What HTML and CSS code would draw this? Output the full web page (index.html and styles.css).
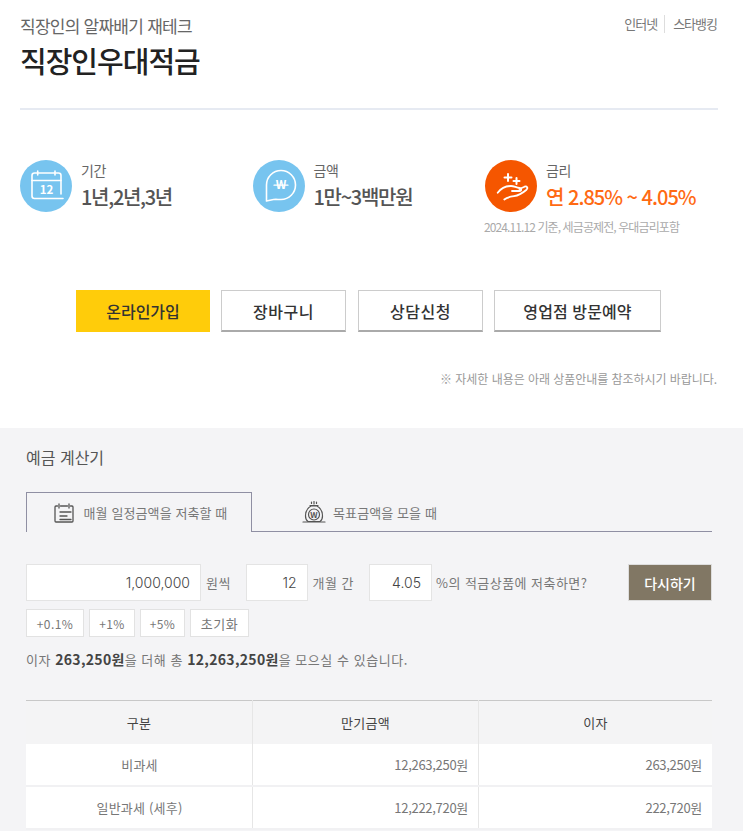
FILE: index.html
```html
<!DOCTYPE html>
<html lang="ko">
<head>
    <meta charset="UTF-8">
    <meta name="viewport" content="width=device-width, initial-scale=1.0">
    <title>직장인우대적금</title>
    <link rel="stylesheet" href="styles.css">
</head>
<body>
    <div class="product">
        <div class="product-head">
            <div>
                <p class="sub-title">직장인의 알짜배기 재테크</p>
                <h1>직장인우대적금</h1>
            </div>
            <div class="channels"><span>인터넷</span><span class="channel-last">스타뱅킹</span></div>
        </div>

        <div class="summary">
            <div class="summary-item item-term">
                <div class="circle circle-blue">
                    <svg width="52" height="52" viewBox="0 0 52 52" fill="none" stroke="#fff" stroke-width="1.6" stroke-linecap="round" stroke-linejoin="round">
                        <path d="M43 38.500H14.500a2.500 2.500 0 0 1-2.500-2.500V15.500a2.500 2.500 0 0 1 2.500-2.500H38.500a2.500 2.500 0 0 1 2.500 2.500V34"/>
                        <path d="M12 20.500H41"/>
                        <path d="M17.700 11v4M35 11v4"/>
                        <text class="icon-text" x="26.500" y="33.500" font-size="11.500">12</text>
                    </svg>
                </div>
                <div class="item-text">
                    <div class="item-label">기간</div>
                    <div class="item-value">1년,2년,3년</div>
                </div>
            </div>
            <div class="summary-item item-amount">
                <div class="circle circle-blue">
                    <svg width="52" height="52" viewBox="0 0 52 52" fill="none" stroke="#fff" stroke-width="1.6" stroke-linecap="round" stroke-linejoin="round">
                        <path d="M13.500 41V25a14.500 14.500 0 1 1 14.500 14.500c-3 0-5.500-.200-7.500 0z"/>
                        <text class="icon-text" x="28" y="29" font-size="11.500">W</text>
                        <path d="M21 25.200h14" stroke-width="1.200"/>
                    </svg>
                </div>
                <div class="item-text">
                    <div class="item-label">금액</div>
                    <div class="item-value">1만~3백만원</div>
                </div>
            </div>
            <div class="summary-item item-rate">
                <div class="circle circle-orange">
                    <svg width="52" height="52" viewBox="0 0 52 52" fill="none" stroke="#fff" stroke-width="1.800" stroke-linecap="round" stroke-linejoin="round">
                        <path d="M23 14v7M19.500 17.500h7M31.500 18v6M28.500 21h6" stroke-width="2"/>
                        <path d="M12.700 32.700c3-4 8-6.700 13.300-6.700 3 0 5 1.500 8.500 2 2.300.300 2.300 3 0 3H27"/>
                        <path d="M34.500 29l5-2.300c2.500-.900 3.800 1.300 2 3-3.500 3-7.500 5.800-12.500 6.500-3.500.500-7 1-9.700 3.300"/>
                    </svg>
                </div>
                <div class="item-text">
                    <div class="item-label">금리</div>
                    <div class="item-value item-value-rate">연 2.85% ~ 4.05%</div>
                </div>
                <div class="rate-note">2024.11.12 기준, 세금공제전, 우대금리포함</div>
            </div>
        </div>

        <div class="actions">
            <a class="btn btn-primary">온라인가입</a>
            <a class="btn btn-cart">장바구니</a>
            <a class="btn btn-consult">상담신청</a>
            <a class="btn btn-visit">영업점 방문예약</a>
        </div>

        <p class="guide">※ 자세한 내용은 아래 상품안내를 참조하시기 바랍니다.</p>
    </div>

    <div class="calc">
        <h2>예금 계산기</h2>

        <div class="tabs">
            <div class="tab tab-active">
                <svg width="20" height="20" viewBox="0 0 20 20" fill="none" stroke="#555" stroke-width="1.300" stroke-linecap="round">
                    <path d="M3.500 3H2a1 1 0 0 0-1 1v14a1 1 0 0 0 1 1H18a1 1 0 0 0 1-1V4a1 1 0 0 0-1-1h-1.500M6.500 3h7M5 1v4M15 1v4M6 9h11M6 13h7M6 16.500h11"/>
                </svg>
                <span>매월 일정금액을 저축할 때</span>
            </div>
            <div class="tab tab-goal">
                <svg width="24" height="22" viewBox="0 0 24 22" fill="none" stroke="#555" stroke-width="1.200" stroke-linecap="round">
                    <path d="M9 5C5.500 7 3.500 11 3.500 15c0 2.500 1 4.500 2.500 5.500h12c1.500-1 2.500-3 2.500-5.500 0-4-2-8-5.500-10z"/>
                    <path d="M9.500 1v1.500M12 .500v2.500M14.500 1v1.500M1 21h22M8 4.500h8"/>
                    <circle cx="12" cy="13.500" r="5.500"/>
                    <text class="icon-text icon-text-dark" x="12" y="16.500" font-size="8">W</text>
                </svg>
                <span>목표금액을 모을 때</span>
            </div>
        </div>

        <div class="calc-form">
            <input class="field field-money" value="1,000,000">
            <span class="field-unit unit-money">원씩</span>
            <input class="field field-month" value="12">
            <span class="field-unit unit-month">개월 간</span>
            <input class="field field-rate" value="4.05">
            <span class="field-unit unit-rate">%의 적금상품에 저축하면?</span>
            <button class="btn-reset">다시하기</button>
        </div>

        <div class="quick">
            <button class="quick-btn q-01">+0.1%</button>
            <button class="quick-btn q-1">+1%</button>
            <button class="quick-btn q-5">+5%</button>
            <button class="quick-btn q-init">초기화</button>
        </div>

        <p class="result">이자 <b>263,250원</b>을 더해 총 <b>12,263,250원</b>을 모으실 수 있습니다.</p>

        <table class="result-table">
            <thead>
                <tr><th class="col-name">구분</th><th class="col-amount">만기금액</th><th>이자</th></tr>
            </thead>
            <tbody>
                <tr><td class="cell-name">비과세</td><td>12,263,250원</td><td>263,250원</td></tr>
                <tr><td class="cell-name">일반과세 (세후)</td><td>12,222,720원</td><td>222,720원</td></tr>
            </tbody>
        </table>
    </div>
</body>
</html>
```

FILE: styles.css
```css
* {
    box-sizing: border-box;
}
html, body {
    height: 831px;
    overflow: hidden;
}
body {
    margin: 0;
    background-color: #fff;
    font-family: "Noto Sans CJK KR", "Noto Sans", sans-serif;
    color: #555;
}
p, h1, h2 {
    margin: 0;
    font-weight: normal;
}
.product {
    height: 428px;
    padding: 0 25px 0 20px;
}
.product-head {
    display: flex;
    justify-content: space-between;
    height: 110px;
    padding-top: 14px;
    border-bottom: 2px solid #e6eaf2;
}
.sub-title {
    font-size: 17px;
    line-height: 24px;
    letter-spacing: -0.75px;
    color: #666;
}
h1 {
    margin-top: 1px;
    font-size: 29px;
    line-height: 42px;
    font-weight: 500;
    letter-spacing: -1px;
    color: #222;
}
.channels {
    display: flex;
    align-items: flex-start;
    padding-top: 1px;
    font-size: 13px;
    line-height: 18px;
    letter-spacing: -1px;
    color: #777;
}
.channels span:first-child {
    padding-right: 7px;
    border-right: 1px solid #ddd;
}
.channel-last {
    padding-left: 8px;
    margin-right: 1px;
}
.summary {
    display: flex;
    height: 180px;
    padding-top: 50px;
}
.summary-item {
    position: relative;
    display: flex;
    align-items: flex-start;
    gap: 9px;
}
.item-term, .item-amount {
    width: 232.500px;
}
.circle {
    display: flex;
    align-items: center;
    justify-content: center;
    flex: none;
    width: 52px;
    height: 52px;
    border-radius: 50%;
}
.circle-blue {
    background-color: #77c4ef;
}
.circle-orange {
    background-color: #f55600;
}
.icon-text {
    fill: #fff;
    stroke: none;
    font-weight: 700;
    text-anchor: middle;
}
.icon-text-dark {
    fill: #555;
}
.item-label {
    font-size: 14px;
    line-height: 20px;
    letter-spacing: -0.5px;
    color: #666;
}
.item-value {
    margin-top: 2px;
    font-size: 20px;
    line-height: 30px;
    font-weight: 500;
    letter-spacing: -1.3px;
    color: #555;
}
.item-value-rate {
    color: #ff6a13;
    letter-spacing: -1px;
}
.rate-note {
    position: absolute;
    top: 58px;
    left: -1px;
    width: 240px;
    font-size: 12px;
    line-height: 18px;
    letter-spacing: -0.9px;
    color: #aaa;
}
.actions {
    display: flex;
    gap: 11px;
    padding-left: 56px;
}
.btn {
    display: flex;
    align-items: center;
    justify-content: center;
    width: 125px;
    height: 42px;
    border: 1px solid #ccc;
    border-bottom: 2px solid #aaa;
    background-color: #fff;
    font-size: 16px;
    font-weight: 500;
    letter-spacing: 0.5px;
    color: #333;
}
.btn-primary {
    width: 134px;
    border: 0;
    background-color: #ffcc0a;
    letter-spacing: 0;
}
.btn-consult {
    margin-left: 1px;
}
.btn-visit {
    width: 167px;
    letter-spacing: 0.1px;
}
.guide {
    margin-top: 38px;
    padding-right: 1px;
    font-size: 12px;
    line-height: 18px;
    letter-spacing: -0.05px;
    text-align: right;
    color: #999;
}
.calc {
    height: 403px;
    padding: 18px 31px 0 26px;
    overflow: hidden;
    background-color: #f4f4f6;
}
h2 {
    font-size: 16px;
    line-height: 22px;
    color: #555;
}
.tabs {
    display: flex;
    height: 40px;
    margin-top: 24px;
    border-bottom: 1px solid #8f8fa3;
}
.tab {
    display: flex;
    align-items: center;
    justify-content: center;
    gap: 10px;
    width: 226px;
    height: 40px;
    font-size: 13px;
    letter-spacing: 0.1px;
    color: #777;
}
.tab-active {
    position: relative;
    z-index: 1;
    padding-left: 3px;
    border: 1px solid #8f8fa3;
    border-bottom: 0;
    background-color: #f4f4f6;
}
.tab-goal {
    gap: 7px;
    width: 235px;
}
.calc-form {
    display: flex;
    align-items: center;
    margin-top: 32px;
}
.field {
    height: 37px;
    padding: 0 10px;
    border: 1px solid #e4e4e4;
    background-color: #fff;
    font-family: Inter, sans-serif;
    font-size: 14px;
    font-weight: 300;
    text-align: right;
    color: #444;
}
.field-money {
    width: 175px;
}
.field-month {
    width: 62px;
}
.field-rate {
    width: 63px;
}
.field-unit {
    flex: none;
    font-size: 13px;
    letter-spacing: 0.45px;
    color: #777;
}
.unit-money {
    width: 39.500px;
    margin-left: 5px;
}
.unit-month {
    width: 56.500px;
    margin-left: 5px;
}
.unit-rate {
    margin-left: 4px;
}
.btn-reset {
    width: 84px;
    height: 37px;
    margin-left: auto;
    border: 1px solid #ddd;
    background-color: #817764;
    font-family: inherit;
    font-size: 14px;
    font-weight: 500;
    color: #fff;
}
.quick {
    display: flex;
    gap: 5px;
    margin-top: 8px;
}
.quick-btn {
    height: 28px;
    padding: 0;
    border: 1px solid #e2e2e2;
    background-color: #fff;
    font-family: inherit;
    font-size: 12px;
    letter-spacing: 0.4px;
    color: #777;
}
.q-01 {
    width: 58px;
}
.q-1 {
    width: 46px;
}
.q-5 {
    width: 45px;
}
.q-init {
    width: 59px;
    font-size: 13px;
    letter-spacing: 0.5px;
}
.result {
    height: 20px;
    margin-top: 13px;
    font-size: 13px;
    line-height: 18px;
    letter-spacing: 0.55px;
    color: #777;
}
.result b {
    font-size: 14px;
    font-weight: 700;
    letter-spacing: 0.3px;
    color: #444;
}
.result-table {
    width: 100%;
    margin-top: 30px;
    border-collapse: collapse;
    table-layout: fixed;
    border-top: 1px solid #c8c8c8;
}
.col-name {
    width: 226.500px;
}
.col-amount {
    width: 226px;
}
.result-table th {
    height: 43px;
    background-color: #f4f4f5;
    font-size: 13px;
    font-weight: normal;
    letter-spacing: 0.3px;
    color: #444;
    border-right: 1px solid #e6e6e6;
}
.result-table td {
    height: 42.500px;
    padding-right: 10px;
    background-color: #fff;
    font-size: 13px;
    text-align: right;
    letter-spacing: -0.3px;
    color: #777;
    border-right: 1px solid #e6e6e6;
    border-bottom: 2px solid #f1f1f3;
}
.result-table th:last-child, .result-table td:last-child {
    border-right: 0;
}
.result-table td.cell-name {
    padding-right: 0;
    text-align: center;
    letter-spacing: 0.2px;
}
```
